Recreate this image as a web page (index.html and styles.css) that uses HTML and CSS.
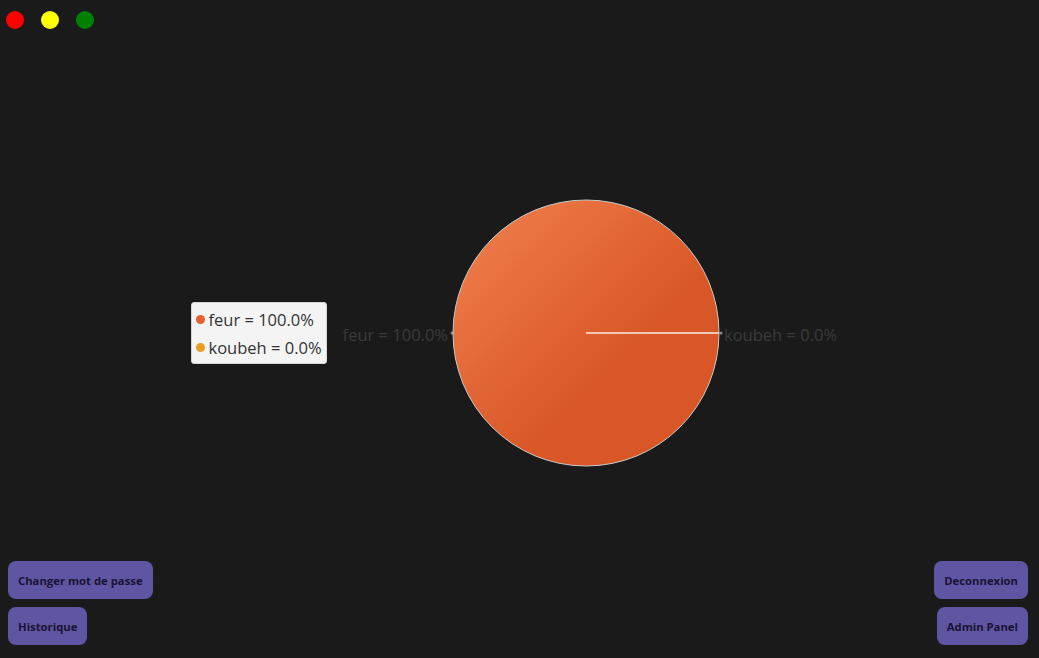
FILE: index.html
```html
<!DOCTYPE html>
<html lang="en">
<head>
  <meta charset="UTF-8">
  <title>Dashboard</title>
  <link rel="stylesheet" href="styles.css">
</head>
<body>

  <div class="window">
    <!-- window controls -->
    <div class="titlebar">
      <span class="dot red"></span>
      <span class="dot yellow"></span>
      <span class="dot green"></span>
    </div>

    <!-- pie chart with legend -->
    <div class="chart">
      <div class="legend">
        <div class="legend-item"><span class="swatch s0"></span>feur = 100.0%</div>
        <div class="legend-item"><span class="swatch s1"></span>koubeh = 0.0%</div>
      </div>
      <svg class="pie" width="510" height="280" viewBox="0 0 510 280">
        <defs>
          <linearGradient id="slice0" x1="0" y1="0" x2="1" y2="1">
            <stop offset="0" stop-color="#f2814f"/>
            <stop offset="0.62" stop-color="#d95727"/>
            <stop offset="1" stop-color="#d95626"/>
          </linearGradient>
        </defs>
        <text class="pie-label" x="109" y="149" text-anchor="end">feur = 100.0%</text>
        <text class="pie-label" x="385" y="149">koubeh = 0.0%</text>
        <circle cx="113" cy="141" r="1.5" fill="#8a8a8a"/>
        <circle cx="382" cy="141" r="1.5" fill="#8a8a8a"/>
        <circle cx="247" cy="141" r="133" fill="url(#slice0)" stroke="#c9c9c9" stroke-width="1"/>
        <line x1="247" y1="141" x2="380" y2="141" stroke="#f3c6b6" stroke-width="2"/>
      </svg>
    </div>

    <!-- bottom actions -->
    <div class="actions">
      <div class="col left">
        <button>Changer mot de passe</button>
        <button>Historique</button>
      </div>
      <div class="col right">
        <button>Deconnexion</button>
        <button>Admin Panel</button>
      </div>
    </div>
  </div>

</body>
</html>
```

FILE: styles.css
```css
html, body {
  margin: 0;
  padding: 0;
  height: 100%;
}

body {
  background-color: #1a1a1a;
  font-family: "Open Sans", "Noto Sans", sans-serif;
  overflow: hidden;
}

.window {
  height: 100%;
  display: flex;
  flex-direction: column;
}

.titlebar {
  display: flex;
  gap: 17px;
  padding: 11px 6px 0;
  height: 29px;
}

.dot {
  width: 18px;
  height: 18px;
  border-radius: 50%;
}

.red { background-color: #ff0000; }
.yellow { background-color: #ffff00; }
.green { background-color: #008000; }

.chart {
  display: flex;
  justify-content: center;
  align-items: center;
  gap: 8px;
  margin-top: 152px;
  height: 280px;
}

.legend {
  background-color: #f4f4f4;
  border: 1px solid #d6d6d6;
  border-radius: 3px;
  padding: 3px 3px 1px 4px;
  width: 127px;
  margin-top: 1px;
  margin-right: 4px;
}

.legend-item {
  display: flex;
  align-items: center;
  gap: 4px;
  height: 28px;
  font-size: 16.5px;
  color: #333333;
  white-space: nowrap;
}

.swatch {
  width: 9px;
  height: 9px;
  border-radius: 50%;
  flex-shrink: 0;
}

.s0 { background-color: #e5602f; }
.s1 { background-color: #ea9e24; }

.pie-label {
  font-family: "Open Sans", "Noto Sans", sans-serif;
  font-size: 16.5px;
  fill: #3a3a3a;
}

.actions {
  margin-top: auto;
  display: flex;
  justify-content: space-between;
  padding: 0 11px 13px 8px;
}

.col {
  display: flex;
  flex-direction: column;
  gap: 8px;
}

.col.left { align-items: flex-start; }
.col.right { align-items: flex-end; }

button {
  background-color: #5e56a2;
  color: #1a1233;
  border: none;
  border-radius: 8px;
  height: 38px;
  padding: 0 10px;
  font-family: "Open Sans", "Noto Sans", sans-serif;
  font-weight: bold;
  font-size: 11.3px;
  cursor: pointer;
}
```
